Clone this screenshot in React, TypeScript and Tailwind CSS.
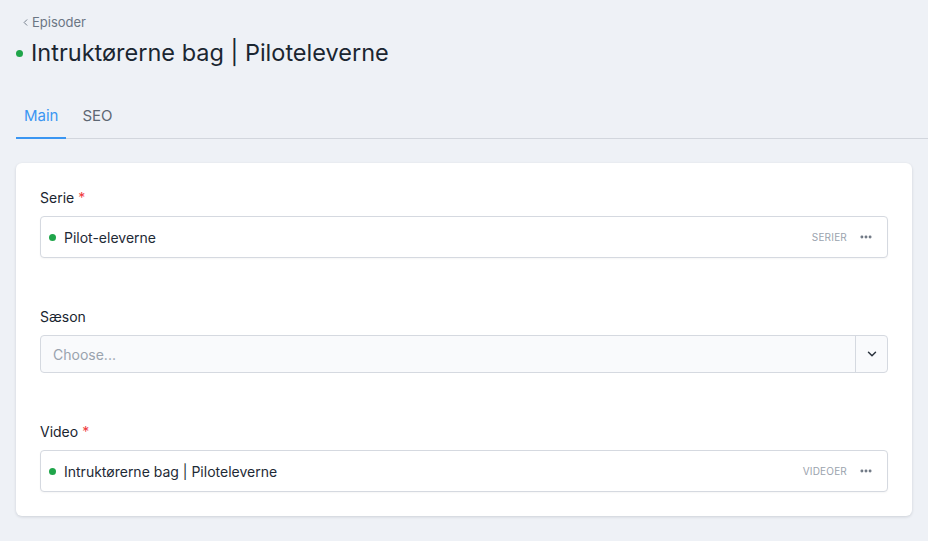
import React from 'react';
import { ChevronLeft, ChevronDown, MoreHorizontal } from 'lucide-react';

const font = { fontFamily: 'Inter, "Noto Sans", sans-serif' };

const Dot = () => <span className="inline-block w-[7px] h-[7px] rounded-full bg-[#1fa54a] shrink-0" />;

const Label: React.FC<{ text: string; required?: boolean }> = ({ text, required }) => (
  <div className="text-[14px] leading-[20px] font-normal text-[#1a2530] mb-[8px]">
    {text}
    {required && <span className="text-[#ef3b3b] ml-[4px]">*</span>}
  </div>
);

const RelationField: React.FC<{ value: string; source: string }> = ({ value, source }) => (
  <div className="flex items-center h-[42px] border border-[#d5d9e0] rounded-[4px] bg-white pl-[8px] pr-[14px] shadow-[0_1px_2px_rgba(0,0,0,0.04)]">
    <Dot />
    <span className="ml-[8px] text-[14px] text-[#1e2a36] flex-1">{value}</span>
    <span className="text-[10px] tracking-[0.02em] text-[#9aa3ae] mr-[12px]">{source}</span>
    <MoreHorizontal size={14} strokeWidth={3} className="text-[#6b7480]" />
  </div>
);

export default function App() {
  return (
    <div className="min-h-screen bg-[#eef1f6] pb-[25px]" style={font}>
      <div className="px-[20px] pt-[14px]">
        <div className="flex items-center text-[13px] text-[#6b7684] leading-[16px]">
          <ChevronLeft size={11} strokeWidth={2} className="mr-[1px]" />
          Episoder
        </div>
        <div className="flex items-center mt-[8px]">
          <span className="inline-block w-[7px] h-[7px] rounded-full bg-[#1fa54a] -ml-[4px] mr-[8px]" />
          <h1 className="text-[23.5px] leading-[30px] text-[#1b2631]">Intruktørerne bag | Piloteleverne</h1>
        </div>
      </div>

      <div className="mt-[38px] ml-[16px] border-b border-[#d2d6dd] flex gap-[8px]">
        <div className="px-[8px] pt-[1px] pb-[12px] text-[15px] leading-[18px] text-[#3a96f2] border-b-2 border-[#3a96f2] -mb-px">Main</div>
        <div className="px-[8px] pt-[1px] pb-[12px] text-[15px] leading-[18px] text-[#5d6773]">SEO</div>
      </div>

      <div className="mx-[16px] mt-[24px] bg-white rounded-[6px] shadow-[0_1px_3px_rgba(20,30,50,0.15)] px-[24px] pt-[25px] pb-[24px]">
        <Label text="Serie" required />
        <RelationField value="Pilot-eleverne" source="SERIER" />

        <div className="mt-[49px]">
          <Label text="Sæson" />
          <div className="flex h-[38px] border border-[#d5d9e0] rounded-[4px] bg-[#f9fafc]">
            <span className="flex-1 flex items-center pl-[12px] text-[14px] text-[#9aa3ae]">Choose...</span>
            <span className="w-[32px] border-l border-[#d5d9e0] flex items-center justify-center">
              <ChevronDown size={14} strokeWidth={2.5} className="text-[#2b333d]" />
            </span>
          </div>
        </div>

        <div className="mt-[49px]">
          <Label text="Video" required />
          <RelationField value="Intruktørerne bag | Piloteleverne" source="VIDEOER" />
        </div>
      </div>
    </div>
  );
}
